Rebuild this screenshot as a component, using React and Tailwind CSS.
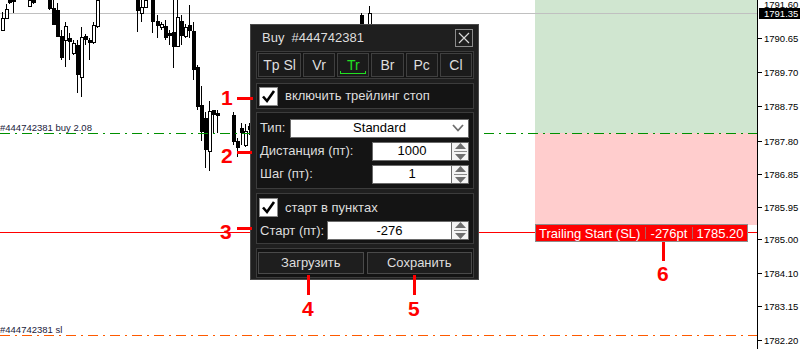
import React from "react";

// x, high, low, bodyTop, bodyBottom, bull (hollow)
const candles = [
  [2, 12, 31, 18, 30, 1],
  [6, 4, 19, 9, 18, 1],
  [9, 0, 4, 0, 3, 0],
  [13, 0, 13, 0, 2, 0],
  [29, 0, 7, 0, 6, 1],
  [33, 0, 4, 0, 3, 0],
  [49, 0, 10, 0, 9, 0],
  [53, 0, 25, 8, 25, 0],
  [57, 3, 37, 10, 37, 0],
  [61, 30, 60, 36, 58, 0],
  [65, 22, 67, 26, 40, 1],
  [69, 33, 60, 38, 42, 0],
  [73, 40, 55, 43, 53, 1],
  [77, 40, 93, 45, 75, 0],
  [81, 27, 97, 37, 77, 1],
  [85, 34, 45, 36, 40, 0],
  [89, 38, 60, 40, 43, 0],
  [93, 22, 44, 25, 42, 1],
  [97, 0, 28, 0, 26, 1],
  [137, 0, 32, 0, 11, 0],
  [141, 0, 22, 7, 13, 1],
  [145, 0, 8, 0, 7, 1],
  [152, 0, 33, 0, 22, 0],
  [157, 15, 38, 21, 26, 0],
  [161, 22, 30, 24, 27, 1],
  [165, 20, 40, 26, 38, 0],
  [169, 30, 45, 33, 36, 0],
  [173, 0, 68, 32, 47, 0],
  [177, 0, 47, 17, 46, 1],
  [181, 15, 45, 21, 36, 0],
  [185, 24, 38, 27, 36, 1],
  [189, 5, 38, 25, 31, 0],
  [193, 22, 80, 31, 70, 0],
  [197, 65, 110, 67, 107, 0],
  [201, 86, 141, 105, 132, 0],
  [205, 112, 168, 118, 150, 0],
  [209, 101, 171, 111, 151, 1],
  [213, 110, 133, 110, 115, 0],
  [217, 110, 133, 113, 116, 0],
  [233, 112, 145, 115, 142, 0],
  [237, 138, 157, 141, 148, 0],
  [241, 123, 145, 128, 133, 0],
  [245, 124, 147, 131, 145, 1],
  [249, 123, 135, 126, 130, 0],
  [361, 13, 24, 15, 24, 0],
  [369, 6, 24, 13, 24, 1],
];

const prices = [
  ["1790.65", 38],
  ["1789.70", 72],
  ["1788.75", 106],
  ["1787.80", 141],
  ["1786.85", 174],
  ["1785.95", 207],
  ["1785.00", 239],
  ["1784.10", 273],
  ["1783.15", 306],
  ["1782.20", 340],
];

const font = "Liberation Sans, Arial, sans-serif";

const Chart = () => (
  <svg className="absolute inset-0" width="800" height="349" viewBox="0 0 800 349">
    <defs>
      <pattern id="dashG" x="0" y="0" width="22" height="2" patternUnits="userSpaceOnUse">
        <rect x="0" y="0" width="10" height="2" fill="#009000" />
        <rect x="15" y="0" width="2" height="2" fill="#009000" />
      </pattern>
      <pattern id="dashO" x="0" y="0" width="22" height="2" patternUnits="userSpaceOnUse">
        <rect x="0" y="0" width="10" height="2" fill="#ff5a00" />
        <rect x="15" y="0" width="2" height="2" fill="#ff5a00" />
      </pattern>
    </defs>
    <rect x="535" y="0" width="222" height="133" fill="#d0e6d0" />
    <rect x="535" y="133" width="222" height="92" fill="#ffcdcd" />
    <rect x="0" y="13" width="757" height="1" fill="#c0c0c0" />
    {candles.map(([x, hi, lo, top, bot, bull], i) => (
      <g key={i}>
        <rect x={x} y={hi} width="1" height={lo - hi} fill="#000" />
        {bull ? (
          <rect x={x - 1 + 0.5} y={top + 0.5} width="3" height={Math.max(bot - top, 1)} fill="#fff" stroke="#000" strokeWidth="1" />
        ) : (
          <rect x={x - 1} y={top} width="4" height={Math.max(bot - top, 1)} fill="#000" />
        )}
      </g>
    ))}
    <rect x="0" y="133" width="757" height="1" fill="url(#dashG)" />
    <rect x="0" y="335" width="757" height="1" fill="url(#dashO)" />
    <rect x="0" y="232" width="757" height="1" fill="#ff0000" />
    <text x="0" y="131" fontSize="9.5" fill="#1a1a3a" fontFamily={font}>#444742381 buy 2.08</text>
    <text x="0" y="333" fontSize="9.5" fill="#1a1a3a" fontFamily={font}>#444742381 sl</text>
    <rect x="757" y="0" width="1" height="349" fill="#000" />
    <text x="764" y="8" fontSize="9.5" fill="#000" fontFamily={font}>1791.60</text>
    {prices.map(([p, y]) => (
      <g key={p}>
        <rect x="757" y={y} width="5" height="1" fill="#000" />
        <text x="764" y={y + 3.5} fontSize="9.5" fill="#000" fontFamily={font}>{p}</text>
      </g>
    ))}
    <rect x="759" y="8" width="41" height="11" fill="#000" />
    <text x="764" y="17" fontSize="9.5" fill="#fff" fontFamily={font}>1791.35</text>
  </svg>
);

const Check = () => (
  <div className="w-[19px] h-[19px] bg-white border border-[#8a8a8a] flex items-center justify-center shrink-0">
    <svg width="15" height="15" viewBox="0 0 15 15">
      <path d="M2 7.5 L6 12 L13 2" fill="none" stroke="#000" strokeWidth="2.6" />
    </svg>
  </div>
);

const Spinner = () => (
  <div className="w-[17px] h-full border-l border-[#6a6a6a] flex flex-col items-center justify-center gap-[2px] bg-[#f4f4f4]">
    <svg width="11" height="6" viewBox="0 0 11 6"><path d="M0 6 L5.5 0 L11 6 Z" fill="#6e6e6e" /></svg>
    <div className="w-[13px] h-px bg-[#8a8a8a]" />
    <svg width="11" height="6" viewBox="0 0 11 6"><path d="M0 0 L5.5 6 L11 0 Z" fill="#6e6e6e" /></svg>
  </div>
);

const NumField = ({ value, width }) => (
  <div className={`flex h-[19px] border border-[#6a6a6a] bg-white ${width}`}>
    <div className="flex-1 flex items-center justify-center text-black text-[13px]">{value}</div>
    <Spinner />
  </div>
);

const tabs = ["Tp Sl", "Vr", "Tr", "Br", "Pc", "Cl"];

const Dialog = () => (
  <div className="absolute left-[250px] top-[24px] w-[229px] h-[256px] bg-[#1f1f1f] border border-[#4a4a4a] pl-[5px] pr-[4px] text-[#dedede]">
    <div className="h-[26px] flex items-center justify-between">
      <span className="text-[13px] pl-[6px] whitespace-pre">Buy  #444742381</span>
      <div className="w-[18px] h-[18px] border border-[#8c8c8c] flex items-center justify-center mr-[1px]">
        <svg width="12" height="12" viewBox="0 0 12 12">
          <path d="M1 1 L11 11 M11 1 L1 11" stroke="#d8d8d8" strokeWidth="1.2" />
        </svg>
      </div>
    </div>
    <div className="h-[28px] border border-[#3c3c3c] bg-[#151515] p-[1px] flex gap-[2px]">
      {tabs.map((t, i) => (
        <div
          key={t}
          className={`relative h-full flex items-center justify-center border border-[#404040] bg-[#1b1b1b] text-[14px] ${i === 0 ? "w-[43px]" : "flex-1"} ${t === "Tr" ? "text-[#22e022]" : ""}`}
        >
          {t}
          {t === "Tr" && (
            <div className="absolute left-[2px] right-[2px] bottom-[2px] h-[3px] border-x border-b border-[#22e022]" />
          )}
        </div>
      ))}
    </div>
    <div className="mt-[4px] h-[26px] border border-[#3c3c3c] bg-[#141414] flex items-center gap-[7px] px-[2px]">
      <Check />
      <span className="text-[13px]">включить трейлинг стоп</span>
    </div>
    <div className="mt-[3px] h-[77px] border border-[#3c3c3c] bg-[#141414] pl-[3px] pr-[4px] pt-[6px] flex flex-col gap-[5px] text-[13px]">
      <div className="flex items-center h-[18px] justify-between">
        <span>Тип:</span>
        <div className="w-[179px] h-[19px] bg-white border border-[#6a6a6a] flex items-center relative text-black">
          <span className="flex-1 text-center">Standard</span>
          <svg className="absolute right-[4px]" width="12" height="8" viewBox="0 0 12 8">
            <path d="M1 1 L6 6.5 L11 1" fill="none" stroke="#6e6e6e" strokeWidth="1.8" />
          </svg>
        </div>
      </div>
      <div className="flex items-center justify-between h-[18px]">
        <span>Дистанция (пт):</span>
        <NumField value="1000" width="w-[97px]" />
      </div>
      <div className="flex items-center justify-between h-[18px]">
        <span>Шаг (пт):</span>
        <NumField value="1" width="w-[97px]" />
      </div>
    </div>
    <div className="mt-[4px] h-[51px] border border-[#3c3c3c] bg-[#141414] pl-[2px] pr-[4px] pt-[4px] flex flex-col gap-[3px] text-[13px]">
      <div className="flex items-center gap-[7px]">
        <Check />
        <span>старт в пунктах</span>
      </div>
      <div className="flex items-center justify-between pl-[1px]">
        <span>Старт (пт):</span>
        <NumField value="-276" width="w-[142px]" />
      </div>
    </div>
    <div className="mt-[4px] h-[30px] border border-[#3c3c3c] bg-[#141414] px-[1px] py-[3px] flex gap-[3px] text-[13px]">
      <div className="flex-1 border border-[#4a4a4a] bg-[#1e1e1e] flex items-center justify-center">Загрузить</div>
      <div className="flex-1 border border-[#4a4a4a] bg-[#1e1e1e] flex items-center justify-center">Сохранить</div>
    </div>
  </div>
);

const Num = ({ n, cls }) => (
  <span className={`absolute text-[21px] font-bold leading-none text-[#ff0000] ${cls}`}>{n}</span>
);

export default function App() {
  return (
    <div className="relative w-[800px] h-[349px] bg-white overflow-hidden" style={{ fontFamily: '"Liberation Sans", Arial, sans-serif' }}>
      <Chart />
      <Dialog />
      <div className="absolute left-[535px] top-[224px] w-[213px] h-[18px] bg-[#ff0000] border border-[#8c8c8c] flex items-center text-white text-[13px] leading-none">
        <span className="pl-[3px] w-[109px]">Trailing Start (SL)</span>
        <span className="w-px h-[12px] bg-[#b06060]" />
        <span className="w-[46px] text-center">-276pt</span>
        <span className="w-px h-[12px] bg-[#b06060]" />
        <span className="flex-1 text-center">1785.20</span>
      </div>

      <Num n="1" cls="left-[221px] top-[87px]" />
      <div className="absolute left-[237px] top-[97px] w-[16px] h-[3px] bg-[#ff0000]" />
      <Num n="2" cls="left-[221px] top-[145px]" />
      <div className="absolute left-[237px] top-[151px] w-[15px] h-[3px] bg-[#ff0000]" />
      <Num n="3" cls="left-[220px] top-[221px]" />
      <div className="absolute left-[237px] top-[227px] w-[15px] h-[3px] bg-[#ff0000]" />

      <div className="absolute left-[307px] top-[275px] w-[3px] h-[20px] bg-[#ff0000]" />
      <Num n="4" cls="left-[302px] top-[298px]" />
      <div className="absolute left-[413px] top-[275px] w-[3px] h-[20px] bg-[#ff0000]" />
      <Num n="5" cls="left-[408px] top-[298px]" />
      <div className="absolute left-[662px] top-[242px] w-[3px] h-[19px] bg-[#ff0000]" />
      <Num n="6" cls="left-[657px] top-[263px]" />
    </div>
  );
}
